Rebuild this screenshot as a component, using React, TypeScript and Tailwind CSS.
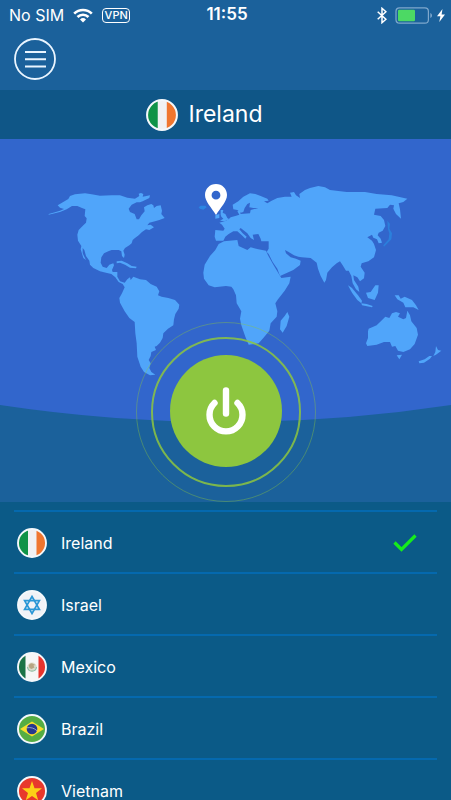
import { useState } from "react";

type Code = "ie" | "il" | "mx" | "br" | "vn";

const countries: { code: Code; name: string }[] = [
  { code: "ie", name: "Ireland" },
  { code: "il", name: "Israel" },
  { code: "mx", name: "Mexico" },
  { code: "br", name: "Brazil" },
  { code: "vn", name: "Vietnam" },
];

function FlagArt({ code }: { code: Code }) {
  switch (code) {
    case "ie":
      return (
        <>
          <path fill="#f1f1f3" d="M0 0h30v30H0z" />
          <path fill="#0f9347" d="M0 0h11v30H0z" />
          <path fill="#f0762f" d="M19.500 0H30v30H19.500z" />
        </>
      );
    case "il":
      return (
        <>
          <path fill="#f1f2f6" d="M0 0h30v30H0z" />
          <g fill="none" stroke="#2b97d6" strokeWidth="1.700">
            <path d="M15 6.500l7.400 12.800H7.600z" />
            <path d="M15 23.500l7.400-12.800H7.600z" />
          </g>
        </>
      );
    case "mx":
      return (
        <>
          <path fill="#f6f6f6" d="M0 0h30v30H0z" />
          <path fill="#1b7347" d="M0 0h8.500v30H0z" />
          <path fill="#e8332c" d="M21.500 0H30v30h-8.500z" />
          <ellipse cx="15" cy="15" rx="4.800" ry="4.400" fill="#dcdac9" />
          <path d="M10.500 15c.5 5.500 8.500 5.500 9 0" fill="none" stroke="#8fc0a8" strokeWidth="1.100" />
          <path d="M11.800 13.500c1-2.300 3-3 4.700-1.500l2 1-2 .5 1 2-3 1.500-2-1z" fill="#b7a582" />
        </>
      );
    case "br":
      return (
        <>
          <path fill="#55ad43" d="M0 0h30v30H0z" />
          <path fill="#f8de2b" d="M3 15L15 7.500 27 15l-12 7.500z" />
          <circle cx="15" cy="15" r="5.300" fill="#27378d" />
          <path d="M10 13.800c3.500-.7 7.500.3 10 3" fill="none" stroke="#93a1cb" strokeWidth="1" />
        </>
      );
    case "vn":
      return (
        <>
          <path fill="#e8392c" d="M0 0h30v30H0z" />
          <path
            fill="#fcd116"
            d="M15 5l2.500 7.200 7.500.1-6 4.600 2.200 7.300-6.200-4.300-6.200 4.300L11 16.900l-6-4.600 7.500-.1z"
          />
        </>
      );
  }
}

function Flag({ code, className }: { code: Code; className: string }) {
  const clip = `flag-${code}-${className.length}`;
  return (
    <svg viewBox="0 0 30 30" className={className} aria-hidden="true">
      <clipPath id={clip}>
        <circle cx="15" cy="15" r="14" />
      </clipPath>
      <g clipPath={`url(#${clip})`}>
        <FlagArt code={code} />
      </g>
      <circle cx="15" cy="15" r="14" fill="none" stroke="#f4f8fb" strokeWidth="1.900" />
    </svg>
  );
}

function StatusBar() {
  return (
    <div className="grid h-7 grid-cols-[1fr_auto_1fr] items-center pr-1.5 pl-[9px] pt-0.5 text-base text-white">
      <div className="flex items-center gap-[9px]">
        <span>No SIM</span>
        <svg viewBox="0 0 20 15" className="h-[15px] w-5" aria-label="Wi-Fi" role="img">
          <g fill="none" stroke="#fff" strokeWidth="2.700">
            <path d="M1.200 5.600a12.600 12.600 0 0 1 17.600 0" />
            <path d="M4.500 9a7.900 7.900 0 0 1 11 0" />
          </g>
          <path fill="#fff" d="M10 14.500l-3-3a4.300 4.300 0 0 1 6 0z" />
        </svg>
        <span className="flex h-[15px] w-7 items-center justify-center rounded border border-white text-[11px] font-medium">
          VPN
        </span>
      </div>
      <time className="text-[17px] font-semibold">11:55</time>
      <div className="flex items-center justify-end">
        <svg viewBox="0 0 10 17" className="mr-2 h-[17px] w-2.5" aria-label="Bluetooth" role="img">
          <path
            d="M.7 4.700l8.200 7.600L5 15.700V1.300l3.900 3.400L.7 12.300"
            fill="none"
            stroke="#fff"
            strokeWidth="1.500"
          />
        </svg>
        <svg viewBox="0 0 38 17" className="mr-1 h-[17px] w-[38px]" aria-label="Battery" role="img">
          <rect x="1" y=".8" width="32.400" height="15.400" rx="3.500" fill="none" stroke="#7fa8cd" strokeWidth="1.200" />
          <rect x="3" y="2.800" width="17" height="11.400" rx="1.200" fill="#4cd964" />
          <path d="M35.300 6c2.300.8 2.300 4.200 0 5z" fill="#7fa8cd" />
        </svg>
        <svg viewBox="0 0 8 13" className="h-[13px] w-2" aria-label="Charging" role="img">
          <path d="M5.500 0L0 7.200h3.400L2.300 13 8 5.500H4.600z" fill="#fff" />
        </svg>
      </div>
    </div>
  );
}

function WorldMap() {
  return (
    <svg viewBox="0 0 451 363" className="col-start-1 row-start-1 h-auto w-full" aria-hidden="true">
      <path fill="#3266cc" d="M0 0h451v266q-225 34-451 0z" />
      <g fill="#50a5fa">
        <g transform="translate(40 31) scale(.33333)">
          <path d="M26 132L45 127 60 122 72 117 60 113 53 106 66 98 76 92 85 87 90 78 105 73 135 70 155 73 180 77 215 76 240 76 262 83 285 86 298 78 296 71 303 69 310 72 308 80 330 76 328 84 308 94 300 97 290 97 275 104 266 116 270 126 284 132 290 148 297 148 304 136 314 124 312 112 322 106 334 102 340 106 342 114 350 108 362 106 366 122 364 132 374 144 358 150 345 154 328 158 322 166 332 164 342 172 328 180 318 178 306 186 296 196 285 204 278 210 275 220 268 226 255 234 250 242 254 254 252 264 246 258 244 244 236 240 215 240 205 244 192 250 184 262 182 278 188 290 200 294 208 284 220 280 222 286 216 300 218 306 232 306 232 320 240 334 254 338 262 328 270 322 272 330 280 320 300 328 318 330 332 342 350 350 358 364 354 376 365 380 385 384 405 390 418 404 416 416 406 432 402 448 400 466 384 476 370 490 368 504 360 518 350 528 344 530 348 540 334 546 332 558 326 570 332 580 328 594 334 606 346 614 330 616 312 606 302 590 292 560 290 520 286 490 284 456 268 444 254 424 240 398 238 384 246 370 254 352 248 342 236 336 226 322 214 312 198 308 180 304 160 294 150 284 148 272 138 258 133 240 128 234 128 250 138 270 130 264 122 238 124 228 114 212 112 194 116 180 130 166 138 158 140 145 134 138 136 118 126 114 112 108 96 108 80 118 60 126 26 134Z" />
          <path d="M230 274L245 272 262 280 275 288 290 290 288 295 270 293 255 284 240 278 230 280Z" />
        </g>
        <g transform="translate(190 31) scale(.33333)">
          <path d="M76 180L100 182 104 176 96 164 88 158 108 152 116 148 122 142 136 138 148 134 142 124 148 122 152 132 180 130 182 120 205 114 190 114 178 112 180 98 172 102 164 114 160 126 152 128 142 120 130 118 128 104 145 94 160 80 180 70 196 72 212 78 232 86 236 92 222 94 232 100 245 92 262 84 285 80 305 80 300 68 312 66 318 76 330 84 328 72 345 60 360 54 385 48 405 52 420 60 470 66 525 66 560 72 605 76 652 86 640 96 626 100 630 118 633 146 618 132 610 116 612 106 600 104 592 114 556 116 552 134 572 138 582 150 586 168 578 182 566 188 563 196 572 206 576 218 566 220 561 208 550 203 546 194 532 202 546 212 552 222 558 240 552 262 535 274 515 280 512 290 524 308 522 325 510 334 502 322 490 316 492 330 505 350 508 366 498 358 488 340 484 318 476 302 468 302 458 286 450 274 440 280 426 292 412 308 408 330 403 338 392 318 384 296 380 278 362 264 335 262 325 260 312 256 296 246 285 240 288 250 302 262 318 266 332 272 330 285 310 300 275 316 270 318 262 296 248 276 236 252 230 246 236 236 236 214 214 214 212 206 205 192 188 194 192 210 182 204 172 190 152 174 148 178 158 190 170 200 166 206 158 198 142 184 130 184 116 192 106 200 100 212 78 212 74 200Z" />
          <path d="M102 214L142 210 146 228 172 240 182 232 205 238 228 242 234 256 250 284 268 314 274 324 302 320 298 340 284 362 264 388 256 400 262 424 260 440 242 460 238 482 220 504 206 520 176 524 166 500 154 466 150 446 154 424 140 400 138 376 130 358 124 350 108 348 74 352 56 346 42 326 40 308 44 284 60 258 76 240 86 222Z" />
          <path d="M292 426L298 440 290 468 278 488 270 478 272 452 284 438Z" />
          <path d="M92 120L100 120 98 128 106 132 112 144 118 148 104 154 90 152 100 146 94 140 92 134Z" />
          <path d="M76 136L88 132 88 144 76 146Z" />
          <path fill="#2b86e2" d="M26 112L32 107 46 107 50 112 40 119 30 116Z" />
        </g>
        <g transform="translate(310 31) scale(.33333)">
          <path fill="#2b80dc" d="M232 152L240 162 238 176 246 190 244 208 222 230 220 226 236 208 238 190 234 178Z" />
          <path d="M114 346L126 354 144 376 156 392 154 400 142 390 126 368Z" />
          <path d="M154 400L170 402 188 408 186 412 156 406Z" />
          <path d="M168 368L182 366 196 346 206 346 204 368 194 390 174 384Z" />
          <path d="M254 376L266 376 272 386 284 380 306 390 318 406 326 420 310 412 286 412 280 398 262 388Z" />
          <path d="M174 484L176 476 200 466 214 452 226 440 238 444 246 430 258 426 270 430 264 440 280 448 288 444 292 422 300 436 304 454 320 474 324 494 314 522 300 538 280 546 264 542 256 528 246 530 240 516 222 516 200 524 172 528 168 520 174 504Z" />
          <path d="M260 556L276 554 268 568Z" />
          <path d="M378 528L384 540 394 542 378 554 370 558 376 546Z" />
          <path d="M366 558L360 566 342 578 328 580 326 574 344 568 358 558Z" />
        </g>
      </g>
      <path
        fill="#fff"
        fillRule="evenodd"
        d="M216 45c6.200 0 11 4.900 11 11 0 6.500-6.500 12.500-11 20-4.500-7.500-11-13.500-11-20 0-6.100 4.800-11 11-11zm0 6.800a4.400 4.400 0 1 0 0 8.800 4.400 4.400 0 0 0 0-8.800z"
      />
    </svg>
  );
}

function PowerButton({ on, onToggle }: { on: boolean; onToggle: () => void }) {
  return (
    <div className="z-10 col-start-1 row-start-1 flex size-[180px] items-center justify-center self-end justify-self-center rounded-full border border-[#8dc63f]/40">
      <div className="flex size-[150px] items-center justify-center rounded-full border-2 border-[#8dc63f]/85 pb-[3px]">
        <button
          type="button"
          aria-label="Toggle VPN connection"
          aria-pressed={on}
          onClick={onToggle}
          className="flex size-28 items-center justify-center rounded-full bg-[#8dc63f]"
        >
          <svg viewBox="0 0 40 48" className="h-12 w-10" fill="none" stroke="#fff" strokeWidth="6.400" strokeLinecap="round">
            <path d="M20 3.500v23" />
            <path d="M8.500 16a16.500 16.500 0 1 0 23 0" />
          </svg>
        </button>
      </div>
    </div>
  );
}

export default function App() {
  const [selected, setSelected] = useState<Code>("ie");
  const [on, setOn] = useState(true);
  const current = countries.find((c) => c.code === selected)!;

  return (
    <div className="flex h-screen flex-col overflow-hidden bg-[#0b5a87] font-['Inter','Liberation_Sans',sans-serif] text-white">
      <header className="h-[90px] shrink-0 bg-[#1b619b]">
        <StatusBar />
        <button type="button" aria-label="Menu" className="mt-2.5 ml-3.5 block size-[42px]">
          <svg viewBox="0 0 42 42" className="size-full" fill="none" stroke="#eaf5ff">
            <circle cx="21" cy="21" r="20" strokeWidth="1.800" />
            <path d="M11 14h21M11 21.300h21M11 28.600h21" strokeWidth="2" />
          </svg>
        </button>
      </header>

      <div className="flex h-[49px] shrink-0 items-center justify-center gap-2.5 bg-[#0f5687] pr-[42px]">
        <Flag code={current.code} className="size-8 shrink-0" />
        <h1 className="text-[23px] font-normal">{current.name}</h1>
      </div>

      <main className="grid shrink-0 bg-[#1b619b]">
        <WorldMap />
        <PowerButton on={on} onToggle={() => setOn(!on)} />
      </main>

      <ul className="min-h-0 flex-1 overflow-y-auto px-3.5 pt-2 [scrollbar-width:none]">
        {countries.map(({ code, name }) => (
          <li key={code} className="h-[62px] border-t-2 border-[#0569ae]">
            <button
              type="button"
              onClick={() => setSelected(code)}
              className="flex h-full w-full items-center pt-0.5 pr-5 pl-[3px] text-left"
            >
              <Flag code={code} className="size-[30px]" />
              <span className="ml-3.5 flex-1 text-base">{name}</span>
              {code === selected && (
                <svg viewBox="0 0 24 18" className="h-[18px] w-6" aria-label="Selected" role="img">
                  <path d="M1.500 8.500l7 7L22.500 1.500" fill="none" stroke="#15ec1c" strokeWidth="3.200" />
                </svg>
              )}
            </button>
          </li>
        ))}
      </ul>
    </div>
  );
}
